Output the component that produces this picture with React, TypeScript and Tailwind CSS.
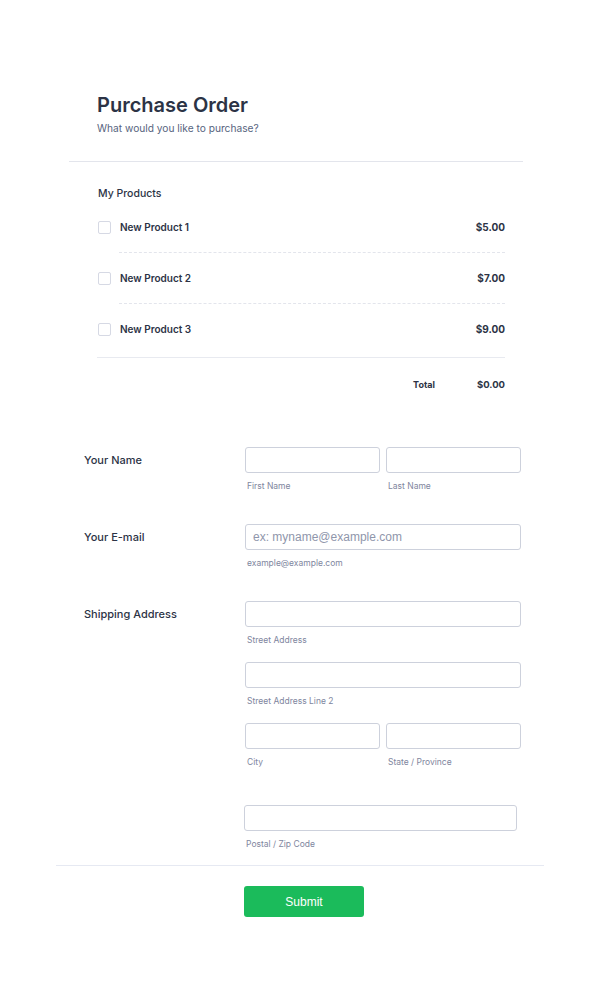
const products = [
  { name: "New Product 1", price: "$5.00" },
  { name: "New Product 2", price: "$7.00" },
  { name: "New Product 3", price: "$9.00" },
];

function Field({ sub, className = "" }: { sub: string; className?: string }) {
  return (
    <div className={className}>
      <input
        type="text"
        className="block w-full h-[26px] rounded-[3px] border border-[#cdd1dc] bg-white px-2 outline-none"
      />
      <div className="mt-[8px] pl-[2px] text-[8.5px] leading-[10px] font-normal text-[#80869e]">{sub}</div>
    </div>
  );
}

export default function App() {
  return (
    <main
      className="min-h-[1000px] w-[600px] bg-white text-[#2c3345]"
      style={{ fontFamily: "Inter, 'Noto Sans', sans-serif" }}
    >
      <div className="pl-[97px] pt-[93px]">
        <h1 className="text-[20px] leading-[24px] font-semibold text-[#2c3345]">Purchase Order</h1>
        <p className="mt-[4px] text-[10.2px] leading-[14px] text-[#57647e]">
          What would you like to purchase?
        </p>
      </div>

      <div className="ml-[69px] mt-[26px] w-[454px] border-t border-[#e3e5ec]" />

      <div className="ml-[97px] w-[408px]">
        <div className="mt-[25px] pl-[1px] text-[10.5px] leading-[14px] font-medium text-[#2c3345]">My Products</div>
        <div className="mt-[1px]">
          {products.map((p, i) => (
            <div key={p.name}>
              <div className={`flex items-center ${i === 2 ? "h-[53px] pb-[3px]" : "h-[50px]"}`}>
                <span className="ml-[1px] h-[13px] w-[13px] rounded-[2px] border border-[#d6d9e4] bg-white" />
                <span className="ml-[9px] text-[10px] font-semibold text-[#2c3345]">{p.name}</span>
                <span className="ml-auto text-[10px] font-bold text-[#2c3345]">{p.price}</span>
              </div>
              {i < 2 ? (
                <div className="ml-[22px] border-t border-dashed border-[#e3e5ec]" />
              ) : (
                <div className="border-t border-[#e8eaf0]" />
              )}
            </div>
          ))}
        </div>
        <div className="mt-[20px] flex h-[14px] items-center justify-end text-[9px] font-bold">
          <span>Total</span>
          <span className="ml-[42px] text-[9.5px]">$0.00</span>
        </div>
      </div>

      <div className="ml-[84px] mt-[55px] w-[437px] text-[11px] font-medium">
        <div className="flex">
          <div className="w-[161px] pt-[6px] leading-[14px]">Your Name</div>
          <div className="flex w-[276px] gap-[6px]">
            <Field sub="First Name" className="flex-1" />
            <Field sub="Last Name" className="flex-1" />
          </div>
        </div>

        <div className="mt-[33px] flex">
          <div className="w-[161px] pt-[6px] leading-[14px]">Your E-mail</div>
          <div className="w-[276px]">
            <input
              type="text"
              placeholder="ex: myname@example.com"
              className="block w-full h-[26px] rounded-[3px] border border-[#cdd1dc] bg-white px-[7px] text-[12px] outline-none placeholder:text-[#8f96ab]"
              style={{ fontFamily: "'Liberation Sans', Arial, sans-serif" }}
            />
            <div className="mt-[8px] pl-[2px] text-[8.5px] leading-[10px] font-normal text-[#80869e]">
              example@example.com
            </div>
          </div>
        </div>

        <div className="mt-[33px] flex">
          <div className="w-[161px] pt-[6px] leading-[14px]">Shipping Address</div>
          <div className="w-[276px] font-normal">
            <Field sub="Street Address" />
            <Field sub="Street Address Line 2" className="mt-[17px]" />
            <div className="mt-[17px] flex gap-[6px]">
              <Field sub="City" className="flex-1" />
              <Field sub="State / Province" className="flex-1" />
            </div>
            <Field sub="Postal / Zip Code" className="-ml-[1px] mt-[38px] w-[273px]" />
          </div>
        </div>
      </div>

      <div className="ml-[56px] mt-[16px] w-[488px] border-t border-[#e6e9f2]" />

      <div className="ml-[244px] mt-[20px]">
        <button
          type="button"
          className="h-[31px] w-[120px] rounded-[3px] bg-[#1bbb5b] text-[12px] text-white"
          style={{ fontFamily: "'Liberation Sans', Arial, sans-serif" }}
        >
          Submit
        </button>
      </div>
    </main>
  );
}
